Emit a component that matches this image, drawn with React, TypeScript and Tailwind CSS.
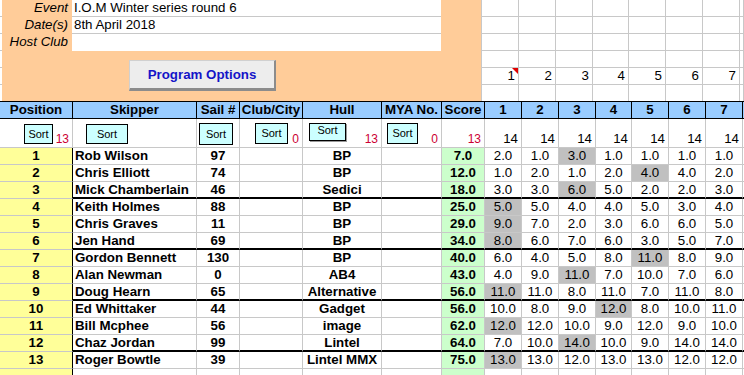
import React from "react";

const lead = ["w-[73px]", "w-[124px]", "w-[43px]", "w-[63px]", "w-[79px]", "w-[60px]", "w-[43px]"];
const race = ["w-[37px]", "w-[37px]", "w-[37px]", "w-[36px]", "w-[37px]", "w-[37px]", "w-[37px]"];

type Row = { pos: number; name: string; sail: string; hull: string; score: string; res: string[]; drop: number };

const rows: Row[] = [
  { pos: 1, name: "Rob Wilson", sail: "97", hull: "BP", score: "7.0", res: ["2.0", "1.0", "3.0", "1.0", "1.0", "1.0", "1.0"], drop: 2 },
  { pos: 2, name: "Chris Elliott", sail: "74", hull: "BP", score: "12.0", res: ["1.0", "2.0", "1.0", "2.0", "4.0", "4.0", "2.0"], drop: 4 },
  { pos: 3, name: "Mick Chamberlain", sail: "46", hull: "Sedici", score: "18.0", res: ["3.0", "3.0", "6.0", "5.0", "2.0", "2.0", "3.0"], drop: 2 },
  { pos: 4, name: "Keith Holmes", sail: "88", hull: "BP", score: "25.0", res: ["5.0", "5.0", "4.0", "4.0", "5.0", "3.0", "4.0"], drop: 0 },
  { pos: 5, name: "Chris Graves", sail: "11", hull: "BP", score: "29.0", res: ["9.0", "7.0", "2.0", "3.0", "6.0", "6.0", "5.0"], drop: 0 },
  { pos: 6, name: "Jen Hand", sail: "69", hull: "BP", score: "34.0", res: ["8.0", "6.0", "7.0", "6.0", "3.0", "5.0", "7.0"], drop: 0 },
  { pos: 7, name: "Gordon Bennett", sail: "130", hull: "BP", score: "40.0", res: ["6.0", "4.0", "5.0", "8.0", "11.0", "8.0", "9.0"], drop: 4 },
  { pos: 8, name: "Alan Newman", sail: "0", hull: "AB4", score: "43.0", res: ["4.0", "9.0", "11.0", "7.0", "10.0", "7.0", "6.0"], drop: 2 },
  { pos: 9, name: "Doug Hearn", sail: "65", hull: "Alternative", score: "56.0", res: ["11.0", "11.0", "8.0", "11.0", "7.0", "11.0", "8.0"], drop: 0 },
  { pos: 10, name: "Ed Whittaker", sail: "44", hull: "Gadget", score: "56.0", res: ["10.0", "8.0", "9.0", "12.0", "8.0", "10.0", "11.0"], drop: 3 },
  { pos: 11, name: "Bill Mcphee", sail: "56", hull: "image", score: "62.0", res: ["12.0", "12.0", "10.0", "9.0", "12.0", "9.0", "10.0"], drop: 0 },
  { pos: 12, name: "Chaz Jordan", sail: "99", hull: "Lintel", score: "64.0", res: ["7.0", "10.0", "14.0", "10.0", "9.0", "14.0", "14.0"], drop: 2 },
  { pos: 13, name: "Roger Bowtle", sail: "39", hull: "Lintel MMX", score: "75.0", res: ["13.0", "13.0", "12.0", "13.0", "13.0", "12.0", "12.0"], drop: 0 },
];

const headers = ["Position", "Skipper", "Sail #", "Club/City", "Hull", "MYA No.", "Score"];

function SortBtn({ className }: { className: string }) {
  return (
    <div className={`absolute flex items-center justify-center border border-black bg-[#ccffff] text-[11px] leading-none ${className}`}>
      Sort
    </div>
  );
}

function TopGrid() {
  return (
    <div className="flex flex-1">
      {[...race, "flex-1"].map((w, c) => (
        <div key={c} className={`${w} border-r border-[#c8c8c8]`}>
          {[0, 1, 2, 3, 4].map((r) => (
            <div key={r} className="relative flex h-[17px] items-center justify-end border-b border-[#c8c8c8] pr-[3px] leading-none">
              {r === 4 && c < 7 ? c + 1 : ""}
              {r === 4 && c === 0 && (
                <svg className="absolute top-0 right-0" width="6" height="6" viewBox="0 0 6 6">
                  <polygon points="0,0 6,0 6,6" fill="#e00000" />
                </svg>
              )}
            </div>
          ))}
          <div className="h-[16px]" />
        </div>
      ))}
    </div>
  );
}

export default function App() {
  return (
    <div className="w-[744px] h-[375px] overflow-hidden bg-white text-black font-['Liberation_Sans',Arial,sans-serif] text-[13.3px]">
      {/* event block */}
      <div className="flex h-[101px]">
        <div className="w-[2px] flex flex-col">
          {[0, 1, 2, 3, 4].map((r) => (
            <div key={r} className="h-[17px] border-b border-[#c8c8c8]" />
          ))}
        </div>
        <div className="w-[483px] bg-[#ffcc99] border-r border-[#c8c8c8] flex flex-col">
          {[
            ["Event", "I.O.M Winter series round 6"],
            ["Date(s)", "8th April 2018"],
            ["Host Club", ""],
          ].map(([label, value], i) => (
            <div key={label} className="flex h-[17px]">
              <div className="w-[70px] pr-[4px] text-right italic leading-[16px]">{label}</div>
              <div className={`w-[369px] bg-white pl-[2px] leading-[16px] ${i < 2 ? "border-b border-[#c8c8c8]" : ""}`}>{value}</div>
            </div>
          ))}
          <button className="mt-[9px] ml-[127px] w-[147px] h-[31px] bg-[#ededed] border border-[#d0d0d0] border-r-2 border-b-[3px] border-r-[#8c8c8c] border-b-[#8c8c8c] font-bold text-[#1414c8] text-[13.3px]">
            Program Options
          </button>
        </div>
        <TopGrid />
      </div>

      {/* header row */}
      <div className="flex h-[18px] bg-[#99ccff] border-y border-black font-bold leading-none">
        {headers.map((h, i) => (
          <div key={h} className={`${lead[i]} flex items-center justify-center border-r border-black`}>{h}</div>
        ))}
        {race.map((w, i) => (
          <div key={i} className={`${w} flex items-center justify-center border-r border-black`}>{i + 1}</div>
        ))}
        <div className="flex-1" />
      </div>

      {/* sort row */}
      <div className="flex h-[29px] leading-none">
        {lead.map((w, i) => {
          const count = ["13", "", "", "0", "13", "0", "13"][i];
          return (
            <div key={i} className={`${w} relative flex items-end justify-end pb-[2px] pr-[3px] border-r border-b border-[#c8c8c8] text-[12px] text-[#cc0033]`}>
              {i === 0 && <SortBtn className="left-[24px] top-[5px] w-[29px] h-[20px] text-black" />}
              {i === 1 && <SortBtn className="left-[13px] top-[5px] w-[42px] h-[20px] text-black" />}
              {i === 2 && <SortBtn className="left-[2px] top-[4px] w-[34px] h-[22px] text-black" />}
              {i === 3 && <SortBtn className="left-[15px] top-[4px] w-[33px] h-[21px] text-black" />}
              {i === 4 && <SortBtn className="left-[6px] top-[4px] w-[37px] h-[18px] text-black pb-[3px] shadow-[1px_1px_0_#999]" />}
              {i === 5 && <SortBtn className="left-[5px] top-[4px] w-[31px] h-[21px] text-black" />}
              {count}
            </div>
          );
        })}
        {race.map((w, i) => (
          <div key={i} className={`${w} flex items-end justify-end pb-[2px] pr-[3px] border-r border-b border-[#c8c8c8]`}>14</div>
        ))}
        <div className="flex-1 border-b border-[#c8c8c8]" />
      </div>

      {/* results */}
      {rows.map((r, idx) => {
        const line = idx % 3 === 2 && idx < 12 ? "border-b-2 border-b-black" : "border-b border-b-[#c8c8c8]";
        return (
          <div key={r.pos} className="flex h-[17px] leading-none">
            <div className={`${lead[0]} flex items-center justify-center bg-[#ffff99] font-bold border-r border-r-black border-b border-b-[#c8c8c8]`}>{r.pos}</div>
            <div className={`${lead[1]} flex items-center pl-[2px] font-bold border-r border-r-[#c8c8c8] ${line}`}>{r.name}</div>
            <div className={`${lead[2]} flex items-center justify-center font-bold border-r border-r-[#c8c8c8] ${line}`}>{r.sail}</div>
            <div className={`${lead[3]} border-r border-r-[#c8c8c8] ${line}`} />
            <div className={`${lead[4]} flex items-center justify-center font-bold border-r border-r-[#c8c8c8] ${line}`}>{r.hull}</div>
            <div className={`${lead[5]} border-r border-r-[#c8c8c8] ${line}`} />
            <div className={`${lead[6]} flex items-center justify-center bg-[#ccffcc] font-bold border-r border-r-[#c8c8c8] ${line}`}>{r.score}</div>
            {r.res.map((v, i) => (
              <div key={i} className={`${race[i]} flex items-center justify-center border-r border-r-[#c8c8c8] ${line} ${i === r.drop ? "bg-[#c0c0c0]" : ""}`}>{v}</div>
            ))}
            <div className={`flex-1 ${line}`} />
          </div>
        );
      })}

      {/* next empty row */}
      <div className="flex h-[17px]">
        <div className={`${lead[0]} bg-[#ffff99] border-r border-black`} />
        {lead.slice(1).map((w, i) => (
          <div key={i} className={`${w} border-r border-[#c8c8c8] ${i === 5 ? "bg-[#ccffcc]" : ""}`} />
        ))}
        {race.map((w, i) => (
          <div key={i} className={`${w} border-r border-[#c8c8c8]`} />
        ))}
      </div>
    </div>
  );
}
